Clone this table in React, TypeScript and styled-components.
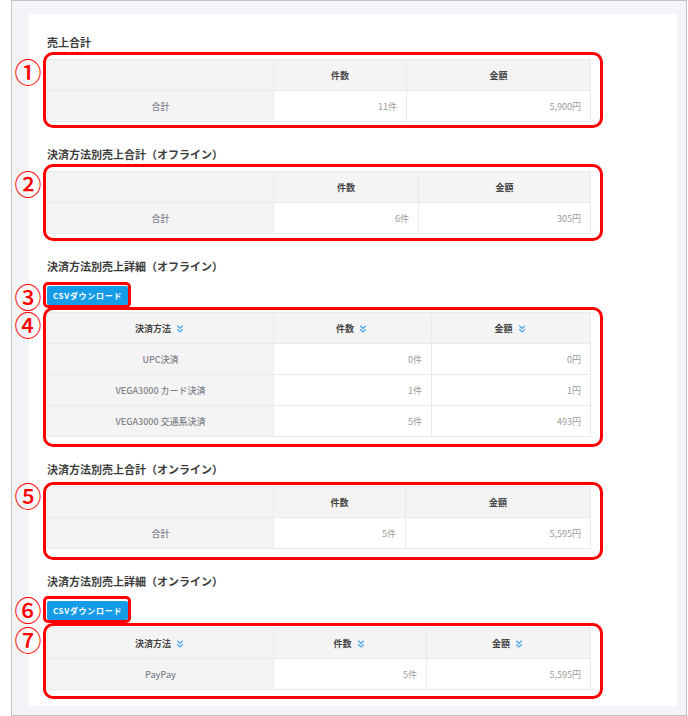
import React from "react";
import styled, { createGlobalStyle } from "styled-components";
import { ChevronsDown } from "lucide-react";

const GlobalStyle = createGlobalStyle`
  body {
    margin: 0;
    background: #ffffff;
    font-family: "Noto Sans CJK JP", "Noto Sans", sans-serif;
  }
`;

type Row = { label: string; count: string; amount: string };

type Section = {
  title: string;
  csv?: { mark: string; box: number[]; markTop: number };
  sortable?: boolean;
  cols: number[];
  rows: Row[];
  mark: string;
  box: number[]; // top, bottom offsets of the red annotation
  markTop: number;
};

const sections: Section[] = [
  {
    title: "売上合計",
    cols: [226, 133, 184],
    rows: [{ label: "合計", count: "11件", amount: "5,900円" }],
    mark: "①",
    box: [7, 6],
    markTop: 13,
  },
  {
    title: "決済方法別売上合計（オフライン）",
    cols: [226, 145, 172],
    rows: [{ label: "合計", count: "6件", amount: "305円" }],
    mark: "②",
    box: [7, 7],
    markTop: 13,
  },
  {
    title: "決済方法別売上詳細（オフライン）",
    csv: { mark: "③", box: [4, 3], markTop: 11 },
    sortable: true,
    cols: [226, 158, 159],
    rows: [
      { label: "UPC決済", count: "0件", amount: "0円" },
      { label: "VEGA3000 カード決済", count: "1件", amount: "1円" },
      { label: "VEGA3000 交通系決済", count: "5件", amount: "493円" },
    ],
    mark: "④",
    box: [5, 10],
    markTop: 13,
  },
  {
    title: "決済方法別売上合計（オンライン）",
    cols: [226, 132, 185],
    rows: [{ label: "合計", count: "5件", amount: "5,595円" }],
    mark: "⑤",
    box: [4, 11],
    markTop: 10,
  },
  {
    title: "決済方法別売上詳細（オンライン）",
    csv: { mark: "⑥", box: [5, 3], markTop: 9 },
    sortable: true,
    cols: [226, 153, 164],
    rows: [{ label: "PayPay", count: "5件", amount: "5,595円" }],
    mark: "⑦",
    box: [4, 9],
    markTop: 13,
  },
];

const Frame = styled.div`
  margin-left: 11px;
  width: 674px;
  min-height: 714px;
  border: 1px solid #c3c3c3;
  background: #f3f4f8;
  display: flex;
  flex-direction: column;
`;

const Card = styled.div`
  margin: 13px 9px 9px 17px;
  background: #ffffff;
  padding: 20px 18px 15px 18px;
  flex: 1;
  display: flex;
  flex-direction: column;
`;

const Block = styled.section`
  display: flex;
  flex-direction: column;
  align-items: flex-start;
  & + & {
    margin-top: 24px;
  }
`;

const Title = styled.h3`
  margin: 0 0 9px 0;
  font-size: 11px;
  line-height: 16px;
  font-weight: 700;
  color: #3d3d3d;
`;

const CsvButton = styled.button`
  height: 19px;
  width: 81px;
  padding: 0;
  border: none;
  border-radius: 2px;
  background: #169be6;
  color: #ffffff;
  font-family: "Noto Sans CJK JP", "Noto Sans", sans-serif;
  font-size: 8px;
  font-weight: 700;
  letter-spacing: 0.7px;
  display: flex;
  align-items: center;
  justify-content: center;
`;

const Annotated = styled.div<{ $mb?: number; $mt?: number }>`
  position: relative;
  margin-top: ${(p) => p.$mt || 0}px;
  margin-bottom: ${(p) => p.$mb || 0}px;
`;

const RedBox = styled.div<{ $top: number; $bottom: number; $right: number; $radius: number }>`
  position: absolute;
  left: -4px;
  right: -${(p) => p.$right}px;
  top: -${(p) => p.$top}px;
  bottom: -${(p) => p.$bottom}px;
  border: 3px solid #ff0000;
  border-radius: ${(p) => p.$radius}px;
  pointer-events: none;
`;

const Mark = styled.span<{ $top: number }>`
  position: absolute;
  left: -33px;
  top: ${(p) => p.$top - 11}px;
  width: 28px;
  height: 22px;
  line-height: 22px;
  text-align: center;
  font-family: "Noto Sans CJK JP", sans-serif;
  font-size: 27px;
  font-weight: 500;
  color: #ff0000;
`;

const Table = styled.table`
  width: 543px;
  border-collapse: collapse;
  table-layout: fixed;
  border: 1px solid #e6ebf2;
  font-size: 9px;
`;

const HeadCell = styled.th`
  height: 30px;
  padding: 0;
  background: #f4f4f4;
  border: 1px solid #e6ebf2;
  color: #444444;
  font-weight: 700;
  text-align: center;
  vertical-align: middle;
`;

const SortIcon = styled(ChevronsDown)`
  color: #4aa6ef;
  vertical-align: -3px;
  margin-left: 3px;
`;

const LabelCell = styled.td`
  height: 30px;
  padding: 0;
  background: #f4f4f4;
  border: 1px solid #e6ebf2;
  color: #7d828a;
  font-weight: 500;
  text-align: center;
`;

const NumCell = styled.td`
  height: 30px;
  padding: 0 9px 0 0;
  background: #ffffff;
  border: 1px solid #e6ebf2;
  color: #9c9c9c;
  text-align: right;
`;

const SortHead = ({ text, sortable }: { text: string; sortable?: boolean }) => (
  <HeadCell>
    {text}
    {sortable && <SortIcon size={12} strokeWidth={2.2} />}
  </HeadCell>
);

const App = () => {
  return (
    <>
      <GlobalStyle />
      <Frame>
        <Card>
          {sections.map((s) => (
            <Block key={s.title}>
              <Title>{s.title}</Title>
              {s.csv && (
                <Annotated $mt={3} $mb={7}>
                  <CsvButton>CSVダウンロード</CsvButton>
                  <RedBox $top={s.csv.box[0]} $bottom={s.csv.box[1]} $right={3} $radius={5} />
                  <Mark $top={s.csv.markTop}>{s.csv.mark}</Mark>
                </Annotated>
              )}
              <Annotated>
                <Table>
                  <colgroup>
                    {s.cols.map((w, i) => (
                      <col key={i} style={{ width: w }} />
                    ))}
                  </colgroup>
                  <thead>
                    <tr>
                      {s.sortable ? <SortHead text="決済方法" sortable /> : <HeadCell />}
                      <SortHead text="件数" sortable={s.sortable} />
                      <SortHead text="金額" sortable={s.sortable} />
                    </tr>
                  </thead>
                  <tbody>
                    {s.rows.map((r) => (
                      <tr key={r.label}>
                        <LabelCell>{r.label}</LabelCell>
                        <NumCell>{r.count}</NumCell>
                        <NumCell>{r.amount}</NumCell>
                      </tr>
                    ))}
                  </tbody>
                </Table>
                <RedBox $top={s.box[0]} $bottom={s.box[1]} $right={12} $radius={10} />
                <Mark $top={s.markTop}>{s.mark}</Mark>
              </Annotated>
            </Block>
          ))}
        </Card>
      </Frame>
    </>
  );
};

export default App;
